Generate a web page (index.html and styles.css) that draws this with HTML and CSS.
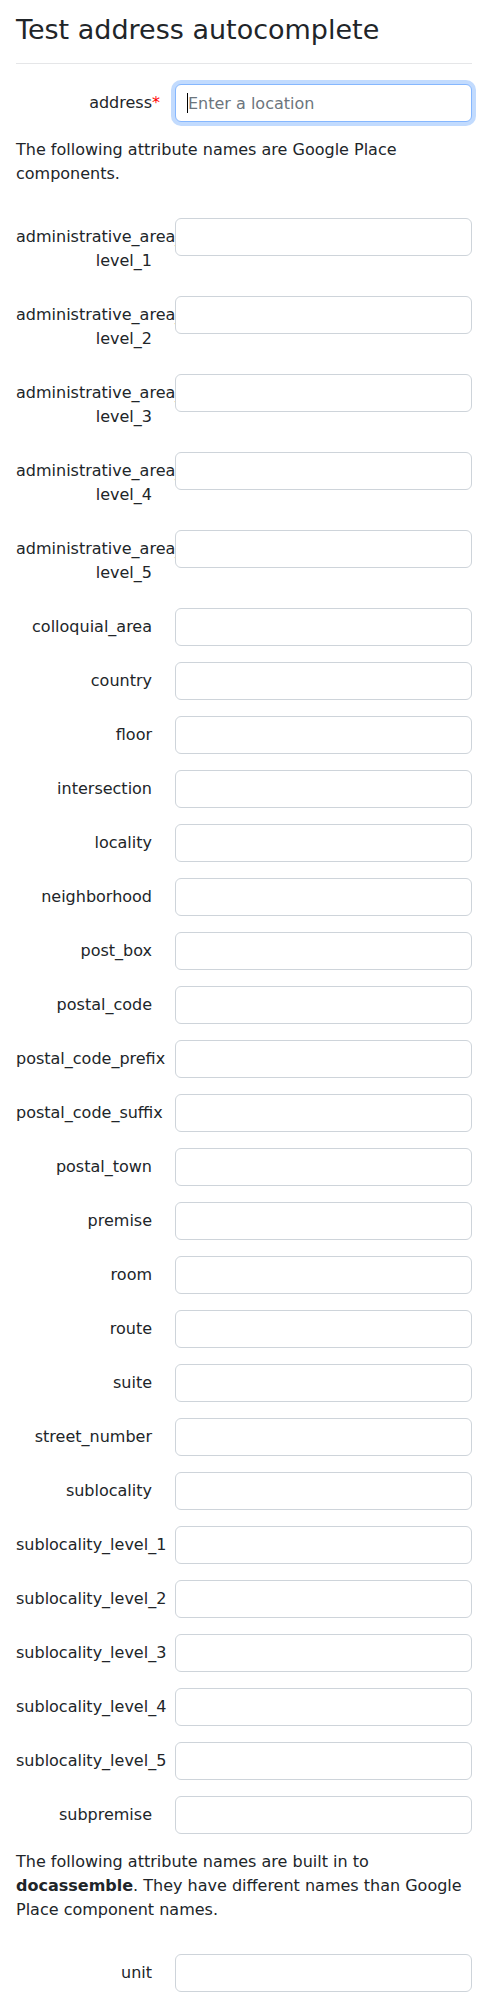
FILE: index.html
```html
<!DOCTYPE html>
<html lang="en">
<head>
<meta charset="utf-8">
<title>Test address autocomplete</title>
<link rel="stylesheet" href="styles.css">
</head>
<body>
<div class="page">
  <h1 class="title">Test address autocomplete</h1>
  <hr class="rule">
  <form class="form">
    <div class="row">
      <label class="lbl req">address</label>
      <div class="ctl"><input class="inp focused" type="text" placeholder="Enter a location"><span class="caret"></span></div>
    </div>
    <p class="note">The following attribute names are Google Place components.</p>

    <div class="row"><label class="lbl">administrative_area_<wbr>level_1</label><div class="ctl"><input class="inp" type="text"></div></div>
    <div class="row"><label class="lbl">administrative_area_<wbr>level_2</label><div class="ctl"><input class="inp" type="text"></div></div>
    <div class="row"><label class="lbl">administrative_area_<wbr>level_3</label><div class="ctl"><input class="inp" type="text"></div></div>
    <div class="row"><label class="lbl">administrative_area_<wbr>level_4</label><div class="ctl"><input class="inp" type="text"></div></div>
    <div class="row"><label class="lbl">administrative_area_<wbr>level_5</label><div class="ctl"><input class="inp" type="text"></div></div>
    <div class="row"><label class="lbl">colloquial_area</label><div class="ctl"><input class="inp" type="text"></div></div>
    <div class="row"><label class="lbl">country</label><div class="ctl"><input class="inp" type="text"></div></div>
    <div class="row"><label class="lbl">floor</label><div class="ctl"><input class="inp" type="text"></div></div>
    <div class="row"><label class="lbl">intersection</label><div class="ctl"><input class="inp" type="text"></div></div>
    <div class="row"><label class="lbl">locality</label><div class="ctl"><input class="inp" type="text"></div></div>
    <div class="row"><label class="lbl">neighborhood</label><div class="ctl"><input class="inp" type="text"></div></div>
    <div class="row"><label class="lbl">post_box</label><div class="ctl"><input class="inp" type="text"></div></div>
    <div class="row"><label class="lbl">postal_code</label><div class="ctl"><input class="inp" type="text"></div></div>
    <div class="row"><label class="lbl">postal_code_prefix</label><div class="ctl"><input class="inp" type="text"></div></div>
    <div class="row"><label class="lbl">postal_code_suffix</label><div class="ctl"><input class="inp" type="text"></div></div>
    <div class="row"><label class="lbl">postal_town</label><div class="ctl"><input class="inp" type="text"></div></div>
    <div class="row"><label class="lbl">premise</label><div class="ctl"><input class="inp" type="text"></div></div>
    <div class="row"><label class="lbl">room</label><div class="ctl"><input class="inp" type="text"></div></div>
    <div class="row"><label class="lbl">route</label><div class="ctl"><input class="inp" type="text"></div></div>
    <div class="row"><label class="lbl">suite</label><div class="ctl"><input class="inp" type="text"></div></div>
    <div class="row"><label class="lbl">street_number</label><div class="ctl"><input class="inp" type="text"></div></div>
    <div class="row"><label class="lbl">sublocality</label><div class="ctl"><input class="inp" type="text"></div></div>
    <div class="row"><label class="lbl">sublocality_level_1</label><div class="ctl"><input class="inp" type="text"></div></div>
    <div class="row"><label class="lbl">sublocality_level_2</label><div class="ctl"><input class="inp" type="text"></div></div>
    <div class="row"><label class="lbl">sublocality_level_3</label><div class="ctl"><input class="inp" type="text"></div></div>
    <div class="row"><label class="lbl">sublocality_level_4</label><div class="ctl"><input class="inp" type="text"></div></div>
    <div class="row"><label class="lbl">sublocality_level_5</label><div class="ctl"><input class="inp" type="text"></div></div>
    <div class="row"><label class="lbl">subpremise</label><div class="ctl"><input class="inp" type="text"></div></div>

    <p class="note">The following attribute names are built in to <strong>docassemble</strong>. They have different names than Google Place component names.</p>

    <div class="row"><label class="lbl">unit</label><div class="ctl"><input class="inp" type="text"></div></div>
  </form>
</div>
</body>
</html>
```

FILE: styles.css
```css
* { box-sizing: border-box; }
html, body { margin: 0; padding: 0; background: #fff; }
body {
  font-family: "DejaVu Sans", sans-serif;
  font-size: 16px;
  line-height: 1.5;
  color: #212529;
}
.page { padding: 14px 16px 40px; }
.title {
  margin: 0 0 8px;
  font-size: 27px;
  font-weight: 400;
  line-height: 1.2;
}
.rule {
  margin: 17px 0 20px;
  border: 0;
  border-top: 1px solid #e5e6e8;
}
.form { margin: 0; }
.row {
  display: grid;
  grid-template-columns: 136px 1fr;
  column-gap: 23px;
  margin-bottom: 16px;
}
.lbl {
  padding: 7px 0;
  text-align: right;
  line-height: 24px;
}
.req::after {
  content: "*";
  color: #ff0000;
  margin-right: -8px;
}
.ctl { position: relative; }
.inp {
  display: block;
  width: 100%;
  height: 38px;
  padding: 6px 12px;
  font-family: "DejaVu Sans", sans-serif;
  font-size: 16px;
  line-height: 24px;
  color: #212529;
  background: #fff;
  border: 1px solid #ced4da;
  border-radius: 6px;
  outline: none;
}
.inp::placeholder { color: #6c757d; opacity: 1; }
.inp.focused {
  border-color: #86b7fe;
  box-shadow: 0 0 0 4px rgba(13, 110, 253, 0.25);
}
.caret {
  position: absolute;
  left: 12px;
  top: 9px;
  width: 1px;
  height: 20px;
  background: #000;
}
.note { margin: 0 0 32px; }
```
